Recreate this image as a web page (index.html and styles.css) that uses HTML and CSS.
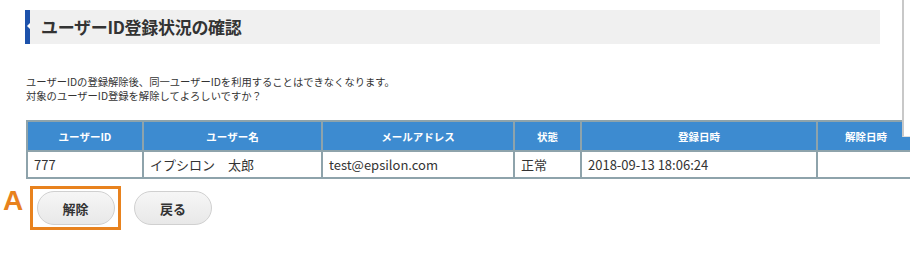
FILE: index.html
```html
<!DOCTYPE html>
<html lang="ja">
<head>
    <meta charset="UTF-8">
    <meta name="viewport" content="width=device-width, initial-scale=1.0">
    <title>ユーザーID登録状況の確認</title>
    <link rel="stylesheet" href="styles.css">
</head>
<body>
    <div class="page">
        <h2 class="title">ユーザーID登録状況の確認</h2>

        <p class="note">
            ユーザーIDの登録解除後、同一ユーザーIDを利用することはできなくなります。<br>
            対象のユーザーID登録を解除してよろしいですか？
        </p>

        <table class="users">
            <colgroup>
                <col style="width: 116px">
                <col style="width: 179px">
                <col style="width: 192px">
                <col style="width: 67px">
                <col style="width: 236px">
                <col style="width: 98px">
            </colgroup>
            <thead>
                <tr>
                    <th>ユーザーID</th>
                    <th>ユーザー名</th>
                    <th>メールアドレス</th>
                    <th>状態</th>
                    <th>登録日時</th>
                    <th>解除日時</th>
                </tr>
            </thead>
            <tbody>
                <tr>
                    <td>777</td>
                    <td>イプシロン　太郎</td>
                    <td>test@epsilon.com</td>
                    <td>正常</td>
                    <td>2018-09-13 18:06:24</td>
                    <td></td>
                </tr>
            </tbody>
        </table>

        <div class="actions">
            <span class="marker">A</span>
            <div class="highlight">
                <button type="button" class="btn">解除</button>
            </div>
            <button type="button" class="btn">戻る</button>
        </div>
    </div>

    <div class="edge"></div>
</body>
</html>
```

FILE: styles.css
```css
body {
    margin: 0;
    padding: 0;
    background: #fff;
    color: #333;
    font-family: "Noto Sans CJK JP", "Noto Sans", sans-serif;
    overflow: hidden;
}

.page {
    padding: 10px 0 0 25px;
}

.title {
    position: relative;
    margin: 0;
    width: 839px;
    height: 34px;
    padding-left: 11px;
    border-left: 5px solid #1d52ab;
    background: #f0f0f0;
    font-size: 17px;
    font-weight: bold;
    line-height: 34px;
    color: #333;
    letter-spacing: -0.3px;
}

/* small notch on the blue bar */
.title::before {
    content: "";
    position: absolute;
    left: -3px;
    top: 13px;
    border-top: 3px solid transparent;
    border-bottom: 3px solid transparent;
    border-right: 3px solid #fff;
}

.note {
    margin: 31px 0 0 1px;
    font-size: 10.3px;
    line-height: 14px;
    color: #333;
}

.users {
    margin: 17px 0 0 1px;
    width: 888px;
    table-layout: fixed;
    border-collapse: collapse;
}

.users th,
.users td {
    border: 2px solid #8ea3ab;
    white-space: nowrap;
    overflow: hidden;
}

.users th {
    height: 28px;
    padding: 0;
    background: #3d8bd0;
    color: #fff;
    font-size: 10.5px;
    font-weight: bold;
    text-align: center;
}

.users td {
    height: 25px;
    padding: 0 0 0 6px;
    font-size: 13px;
    text-align: left;
    color: #333;
}

.actions {
    display: flex;
    align-items: center;
    margin: 7px 0 0 -22px;
}

.marker {
    align-self: flex-start;
    width: 27px;
    margin-top: 1px;
    font-family: "Liberation Sans", Arial, sans-serif;
    font-size: 28px;
    font-weight: bold;
    line-height: 28px;
    color: #e8821e;
}

.highlight {
    display: flex;
    align-items: center;
    justify-content: center;
    width: 85px;
    height: 38px;
    border: 3px solid #e8821e;
    margin-right: 13px;
}

.btn {
    width: 78px;
    height: 34px;
    padding: 0;
    border: 1px solid #d0d0d0;
    border-radius: 17px;
    background: linear-gradient(#f6f6f6, #e8e8e8);
    font-family: "Noto Sans CJK JP", "Noto Sans", sans-serif;
    font-size: 13px;
    font-weight: bold;
    color: #333;
    cursor: pointer;
}

.edge {
    position: absolute;
    top: 0;
    left: 902px;
    width: 8px;
    height: 136px;
    background: #fff;
    border-left: 2px solid #c8c8c8;
    border-bottom: 1px solid #e0e0e0;
}
```
